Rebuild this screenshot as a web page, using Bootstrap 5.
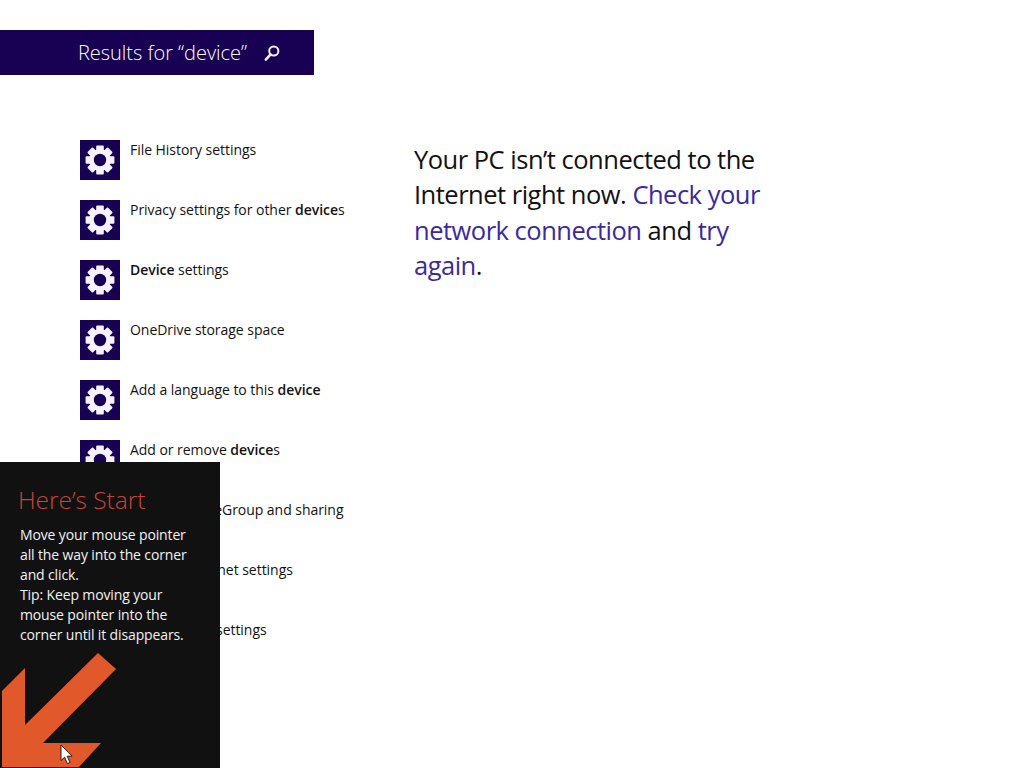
<!DOCTYPE html>
<html lang="en">
<head>
<meta charset="utf-8">
<title>Results for device</title>
<link rel="stylesheet" href="https://cdn.jsdelivr.net/npm/bootstrap@5.3.0/dist/css/bootstrap.min.css">
<style>
html,body{height:768px;overflow:hidden;background:#fff;}
body{font-family:"Open Sans","Noto Sans","Liberation Sans",sans-serif;color:#111;position:relative;}
.srch-banner{width:314px;height:45px;margin-top:30px;background:#180053;color:#fff;padding-left:78px;font-size:20px;font-weight:300;letter-spacing:-.03px;}
.srch-icon{margin-left:16px;}
.page-body{margin-top:65px;padding-left:80px;}
.res-col{width:334px;}
.res-item{height:60px;font-size:14px;letter-spacing:-.04px;line-height:20px;}
.res-item b{font-weight:600;}
.res-tile{width:40px;height:40px;background:#180053;flex:none;margin-right:10px;}
.msg-text{width:350px;font-size:25.5px;line-height:35.4px;font-weight:400;letter-spacing:-.5px;margin-top:2px;color:#111;}
.msg-text a{color:#3a2a9c;text-decoration:none;}
.start-tip{position:absolute;left:0;top:462px;width:220px;height:306px;background:#111;color:#f2f2f2;padding:22px 0 0 20px;overflow:hidden;}
.start-title{font-size:24.5px;font-weight:300;line-height:34px;color:#c9452f;letter-spacing:-.02px;margin:-1px 0 8px -2px;}
.start-body{font-size:14px;line-height:20px;letter-spacing:-.13px;white-space:nowrap;}
.start-arrow{position:absolute;left:0;top:190px;}
</style>
</head>
<body>
<svg width="0" height="0" class="d-block">
<defs>
<symbol id="gear" viewBox="0 0 40 40">
<g fill="#f6f2fb">
<rect x="16.2" y="5.6" width="7.6" height="28.8" rx="1"/>
<rect x="16.2" y="5.6" width="7.6" height="28.8" rx="1" transform="rotate(45 20 20)"/>
<rect x="16.2" y="5.6" width="7.6" height="28.8" rx="1" transform="rotate(90 20 20)"/>
<rect x="16.2" y="5.6" width="7.6" height="28.8" rx="1" transform="rotate(135 20 20)"/>
<circle cx="20" cy="20" r="10.8"/>
</g>
<circle cx="20" cy="20" r="6.2" fill="#180053"/>
</symbol>
</defs>
</svg>

<header class="srch-banner d-flex align-items-center">
<span>Results for “device”</span>
<svg class="srch-icon" width="18" height="18" viewBox="0 0 18 18"><circle cx="10.8" cy="7" r="4.6" fill="none" stroke="#f3effa" stroke-width="2"/><path d="M7.6 10.4 2.8 15.6" stroke="#f3effa" stroke-width="2.6" stroke-linecap="round"/></svg>
</header>

<main class="page-body d-flex">
<div class="res-col">
<div class="res-item d-flex"><svg class="res-tile"><use href="#gear"/></svg><span>File History settings</span></div>
<div class="res-item d-flex"><svg class="res-tile"><use href="#gear"/></svg><span>Privacy settings for other <b>device</b>s</span></div>
<div class="res-item d-flex"><svg class="res-tile"><use href="#gear"/></svg><span><b>Device</b> settings</span></div>
<div class="res-item d-flex"><svg class="res-tile"><use href="#gear"/></svg><span>OneDrive storage space</span></div>
<div class="res-item d-flex"><svg class="res-tile"><use href="#gear"/></svg><span>Add a language to this <b>device</b></span></div>
<div class="res-item d-flex"><svg class="res-tile"><use href="#gear"/></svg><span>Add or remove <b>device</b>s</span></div>
<div class="res-item d-flex"><svg class="res-tile"><use href="#gear"/></svg><span>Change HomeGroup and sharing</span></div>
<div class="res-item d-flex"><svg class="res-tile"><use href="#gear"/></svg><span>Change Ethernet settings</span></div>
<div class="res-item d-flex"><svg class="res-tile"><use href="#gear"/></svg><span>Change Sync settings</span></div>
</div>
<p class="msg-text">Your PC isn’t connected to the Internet right now. <a href="#">Check your network connection</a> and <a href="#">try again</a>.</p>
</main>

<aside class="start-tip">
<h2 class="start-title">Here’s Start</h2>
<div class="start-body">Move your mouse pointer<br>all the way into the corner<br>and click.<br>Tip: Keep moving your<br>mouse pointer into the<br>corner until it disappears.</div>
<svg class="start-arrow" width="220" height="116" viewBox="0 652 220 116">
<polygon fill="#e1592b" points="98,653 116,669 43,743 101,743 79,767 2,767 2,691 25,668 25,725"/>
<path d="M61 745V760.5L64.6 757.2 67.4 763.6 70 762.4 67.2 756.2H72Z" fill="#fff" stroke="#111" stroke-width=".9"/>
</svg>
</aside>
<script src="https://cdn.jsdelivr.net/npm/bootstrap@5.3.0/dist/js/bootstrap.bundle.min.js"></script>
</body>
</html>
